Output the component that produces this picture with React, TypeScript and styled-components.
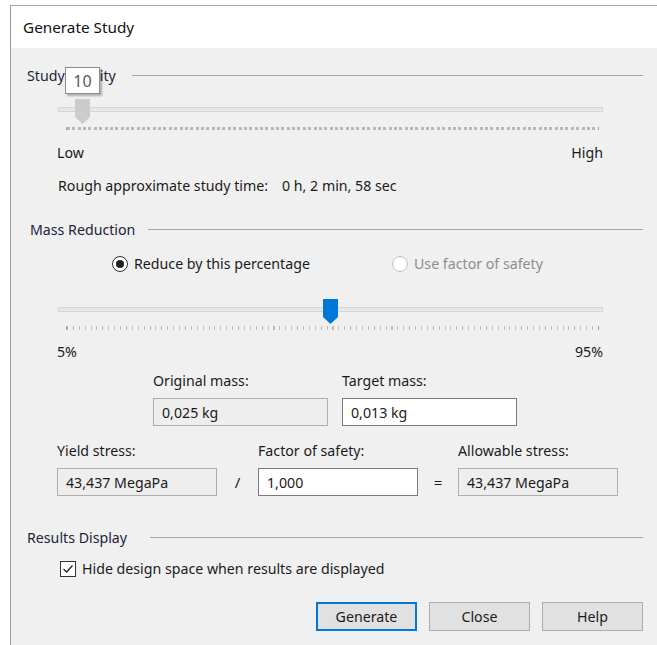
import styled, { createGlobalStyle } from "styled-components";

const GlobalStyle = createGlobalStyle`
  html, body {
    margin: 0;
    padding: 0;
    background: #ffffff;
  }
  body {
    font-family: "Noto Sans", "Open Sans", "Liberation Sans", sans-serif;
    font-size: 14.2px;
    color: #1b1b1b;
  }
`;

const Window = styled.div`
  margin: 5px 0 0 10px;
  height: 639px;
  border-left: 1px solid #9a9a9a;
  border-top: 1px solid #a8a8a8;
  background: #f0f0f0;
  display: flex;
  flex-direction: column;
`;

const TitleBar = styled.div`
  height: 42px;
  flex-shrink: 0;
  background: #ffffff;
  display: flex;
  align-items: center;
  padding-left: 12px;
  font-size: 15.3px;
  color: #111;
`;

const Body = styled.div`
  flex: 1;
  padding: 17px 14px 0 16px;
  display: flex;
  flex-direction: column;
`;

const GroupHeader = styled.div<{ $mt?: number; $indent?: number; $gap: number }>`
  display: flex;
  align-items: center;
  height: 20px;
  margin-top: ${(p) => p.$mt ?? 0}px;
  padding-left: ${(p) => p.$indent ?? 0}px;
  color: #1a2438;

  &::after {
    content: "";
    flex: 1;
    margin-left: ${(p) => p.$gap}px;
    border-top: 1px solid #a6a6a6;
  }
`;

const Row = styled.div<{ $mt: number; $ml: number }>`
  display: flex;
  align-items: center;
  line-height: 18px;
  margin-top: ${(p) => p.$mt}px;
  margin-left: ${(p) => p.$ml}px;
`;

const EndsRow = styled(Row)`
  width: 546px;
  justify-content: space-between;
`;

const TimeValue = styled.span`
  margin-left: 14px;
`;

/* slider */

const SliderWrap = styled.div<{ $mt: number }>`
  position: relative;
  width: 545px;
  height: 33px;
  margin: ${(p) => p.$mt}px 0 0 31px;
`;

const Track = styled.div`
  margin-top: 8px;
  height: 3px;
  background: #e7e7e7;
  border: 1px solid #d6d6d6;
`;

const Ticks = styled.div<{ $dense: boolean }>`
  margin: ${(p) => (p.$dense ? 15 : 14)}px 0 0 8px;
  width: 531px;
  height: ${(p) => (p.$dense ? 3 : 4)}px;
  background: ${(p) =>
    p.$dense
      ? "repeating-linear-gradient(90deg, #b8b8b8 0 3px, transparent 3px 5.36px)"
      : "repeating-linear-gradient(90deg, #bdbdbd 0 1px, transparent 1px 5.9px)"};
  border-left: 1px solid #9a9a9a;
  border-right: 1px solid #9a9a9a;
`;

const ThumbIcon = styled.svg`
  position: absolute;
  top: 0;
`;

const Tip = styled.div`
  position: absolute;
  top: -32px;
  left: 7px;
  width: 33px;
  height: 25px;
  background: #ffffff;
  border: 1px solid #8c8c8c;
  box-shadow: 2px 2px 2px rgba(0, 0, 0, 0.28);
  display: flex;
  align-items: center;
  justify-content: center;
  font-size: 16px;
  color: #5a5a5a;
  z-index: 2;
`;

type SliderProps = {
  mt: number;
  thumbLeft: number;
  color: string;
  dense: boolean;
  tip?: string;
};

const Slider = ({ mt, thumbLeft, color, dense, tip }: SliderProps) => (
  <SliderWrap $mt={mt}>
    <Track />
    <Ticks $dense={dense} />
    <ThumbIcon width="15" height="25" viewBox="0 0 15 25" style={{ left: thumbLeft }}>
      <path d="M0 0 H15 V18 L7.5 25 L0 18 Z" fill={color} />
    </ThumbIcon>
    {tip && <Tip>{tip}</Tip>}
  </SliderWrap>
);

/* radio + checkbox */

const RadioRow = styled.div`
  display: grid;
  grid-template-columns: 280px auto;
  margin: 16px 0 0 85px;
  line-height: 18px;
`;

const Option = styled.label<{ $disabled?: boolean }>`
  display: flex;
  align-items: center;
  gap: 6px;
  color: ${(p) => (p.$disabled ? "#8d8d8d" : "#1b1b1b")};
`;

const RadioDot = styled.span<{ $checked?: boolean; $disabled?: boolean }>`
  width: 14px;
  height: 14px;
  border-radius: 50%;
  border: 1px solid ${(p) => (p.$disabled ? "#c2c2c2" : "#333")};
  background: #ffffff;
  display: flex;
  align-items: center;
  justify-content: center;

  &::after {
    content: "";
    display: ${(p) => (p.$checked ? "block" : "none")};
    width: 8px;
    height: 8px;
    border-radius: 50%;
    background: #222;
  }
`;

const CheckBox = styled.span`
  width: 14px;
  height: 14px;
  border: 1px solid #333;
  background: #ffffff;
  display: flex;
  align-items: center;
  justify-content: center;
`;

/* fields */

const MassGrid = styled.div`
  display: grid;
  grid-template-columns: 175px 175px;
  column-gap: 14px;
  margin: 11px 0 0 126px;
`;

const StressGrid = styled.div`
  display: grid;
  grid-template-columns: 160px 41px 160px 40px 160px;
  margin: 16px 0 0 30px;
`;

const Field = styled.div`
  display: flex;
  flex-direction: column;
  gap: 8px;
`;

const FieldLabel = styled.div`
  line-height: 18px;
`;

const TextBox = styled.div<{ $readOnly?: boolean }>`
  height: 26px;
  box-sizing: content-box;
  border: 1px solid ${(p) => (p.$readOnly ? "#adadad" : "#7a7a7a")};
  background: ${(p) => (p.$readOnly ? "#eeeeee" : "#ffffff")};
  display: flex;
  align-items: center;
  padding-left: 8px;
  color: #1b1b1b;
`;

const Operator = styled.div`
  align-self: end;
  height: 28px;
  display: flex;
  align-items: center;
  justify-content: center;
  font-size: 15px;
`;

/* buttons */

const ButtonRow = styled.div`
  display: flex;
  justify-content: flex-end;
  gap: 12px;
  margin-top: 24px;
`;

const Button = styled.button<{ $default?: boolean }>`
  width: 101px;
  height: 29px;
  box-sizing: border-box;
  font-family: inherit;
  font-size: 14.2px;
  color: #1b1b1b;
  background: #e1e1e1;
  border: ${(p) => (p.$default ? "2px solid #0078d7" : "1px solid #adadad")};
  padding: 0;
`;

export default function App() {
  return (
    <>
      <GlobalStyle />
      <Window>
        <TitleBar>Generate Study</TitleBar>
        <Body>
          <GroupHeader $gap={16}>Study Quality</GroupHeader>
          <Slider mt={14} thumbLeft={17} color="#cccccc" dense tip="10" />
          <EndsRow $mt={12} $ml={30}>
            <span>Low</span>
            <span>High</span>
          </EndsRow>
          <Row $mt={15} $ml={31}>
            Rough approximate study time:
            <TimeValue>0 h, 2 min, 58 sec</TimeValue>
          </Row>

          <GroupHeader $mt={24} $indent={3} $gap={13}>
            Mass Reduction
          </GroupHeader>
          <RadioRow>
            <Option>
              <RadioDot $checked />
              Reduce by this percentage
            </Option>
            <Option $disabled>
              <RadioDot $disabled />
              Use factor of safety
            </Option>
          </RadioRow>
          <Slider mt={26} thumbLeft={265} color="#0078d7" dense={false} />
          <EndsRow $mt={11} $ml={30}>
            <span>5%</span>
            <span>95%</span>
          </EndsRow>

          <MassGrid>
            <Field>
              <FieldLabel>Original mass:</FieldLabel>
              <TextBox $readOnly>0,025 kg</TextBox>
            </Field>
            <Field>
              <FieldLabel>Target mass:</FieldLabel>
              <TextBox>0,013 kg</TextBox>
            </Field>
          </MassGrid>

          <StressGrid>
            <Field>
              <FieldLabel>Yield stress:</FieldLabel>
              <TextBox $readOnly>43,437 MegaPa</TextBox>
            </Field>
            <Operator>/</Operator>
            <Field>
              <FieldLabel>Factor of safety:</FieldLabel>
              <TextBox>1,000</TextBox>
            </Field>
            <Operator>=</Operator>
            <Field>
              <FieldLabel>Allowable stress:</FieldLabel>
              <TextBox $readOnly>43,437 MegaPa</TextBox>
            </Field>
          </StressGrid>

          <GroupHeader $mt={31} $gap={23}>
            Results Display
          </GroupHeader>
          <Row $mt={13} $ml={33}>
            <Option>
              <CheckBox>
                <svg width="12" height="12" viewBox="0 0 12 12">
                  <path d="M1.5 6 L4.6 9 L10.5 2.5" fill="none" stroke="#222" strokeWidth="1.3" />
                </svg>
              </CheckBox>
              Hide design space when results are displayed
            </Option>
          </Row>

          <ButtonRow>
            <Button $default>Generate</Button>
            <Button>Close</Button>
            <Button>Help</Button>
          </ButtonRow>
        </Body>
      </Window>
    </>
  );
}
